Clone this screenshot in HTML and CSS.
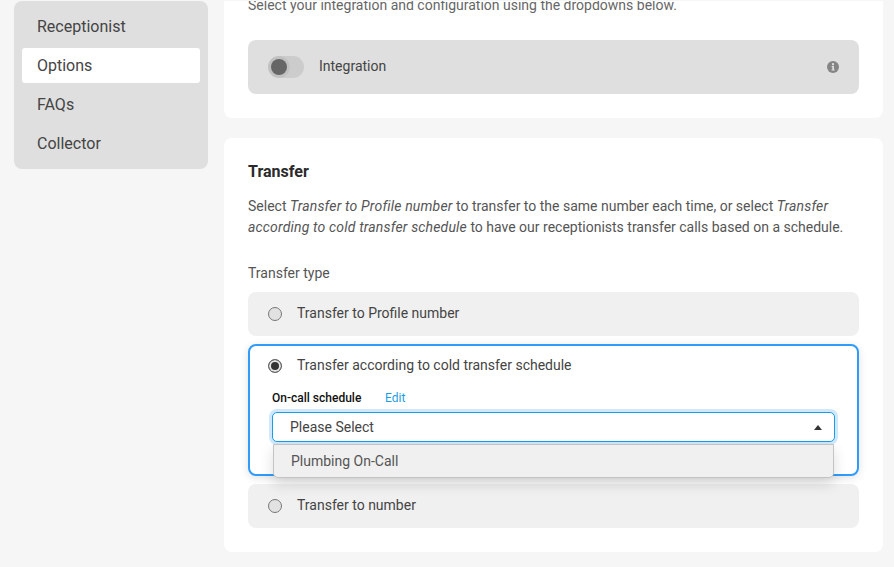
FILE: index.html
```html
<!DOCTYPE html>
<html lang="en">
<head>
    <meta charset="UTF-8">
    <meta name="viewport" content="width=device-width, initial-scale=1.0">
    <title>Options</title>
    <link rel="stylesheet" href="styles.css">
</head>
<body>
    <div class="layout">
        <nav class="sidebar">
            <a class="nav-item">Receptionist</a>
            <a class="nav-item active">Options</a>
            <a class="nav-item">FAQs</a>
            <a class="nav-item">Collector</a>
        </nav>

        <main class="content">
            <section class="card card-integration">
                <p class="card-intro">Select your integration and configuration using the dropdowns below.</p>
                <div class="integration-row">
                    <span class="toggle"><span class="toggle-knob"></span></span>
                    <span class="integration-label">Integration</span>
                    <svg class="info-icon" width="12" height="12" viewBox="0 0 12 12">
                        <circle cx="6" cy="6" r="6" fill="#858585"/>
                        <rect x="5" y="2.2" width="2" height="2" fill="#dfdfdf"/>
                        <path d="M4.6 5h2.4v3.6h.7v1H4.5v-1h.8V6h-.7z" fill="#dfdfdf"/>
                    </svg>
                </div>
            </section>

            <section class="card card-transfer">
                <h2 class="card-title">Transfer</h2>
                <p class="card-text">Select <em>Transfer to Profile number</em> to transfer to the same number each time, or select <em>Transfer according to cold transfer schedule</em> to have our receptionists transfer calls based on a schedule.</p>
                <div class="field-label">Transfer type</div>

                <div class="options">
                    <div class="option">
                        <div class="option-head">
                            <span class="radio"></span>
                            <span class="option-text">Transfer to Profile number</span>
                        </div>
                    </div>

                    <div class="option selected">
                        <div class="option-head">
                            <span class="radio checked"></span>
                            <span class="option-text">Transfer according to cold transfer schedule</span>
                        </div>
                        <div class="schedule-label">
                            <span class="schedule-name">On-call schedule</span>
                            <a class="schedule-edit">Edit</a>
                        </div>
                        <div class="select-wrap">
                            <div class="select">
                                <span>Please Select</span>
                                <span class="caret"></span>
                            </div>
                            <div class="select-menu">Plumbing On-Call</div>
                        </div>
                    </div>

                    <div class="option">
                        <div class="option-head">
                            <span class="radio"></span>
                            <span class="option-text">Transfer to number</span>
                        </div>
                    </div>
                </div>
            </section>
        </main>
    </div>
</body>
</html>
```

FILE: styles.css
```css
* {
    box-sizing: border-box;
}
html, body {
    height: 100%;
}
body {
    margin: 0;
    padding-top: 1px;
    overflow: hidden;
    background-color: #f6f6f6;
    color: #444;
    font-family: Roboto, "Liberation Sans", sans-serif;
}
.layout {
    display: flex;
    align-items: flex-start;
    gap: 16px;
    padding: 0 11px 0 14px;
}

/* sidebar */
.sidebar {
    width: 194px;
    flex-shrink: 0;
    display: flex;
    flex-direction: column;
    gap: 4px;
    padding: 8px;
    background-color: #dfdfdf;
    border-radius: 8px;
}
.nav-item {
    height: 35px;
    line-height: 35px;
    padding-left: 15px;
    font-size: 16px;
    color: #444;
    border-radius: 3px;
}
.nav-item.active {
    background-color: #fff;
}

/* cards */
.content {
    flex: 1;
    display: flex;
    flex-direction: column;
    gap: 20px;
}
.card {
    background-color: #fff;
    border-radius: 0 0 8px 8px;
    padding: 0 24px;
}
.card-integration {
    height: 117px;
    overflow: hidden;
}
.card-intro {
    margin: -6px 0 0;
    height: 45px;
    font-size: 14px;
    line-height: 21px;
    color: #666;
}
.integration-row {
    height: 54px;
    display: flex;
    align-items: center;
    padding: 0 20px;
    background-color: #dfdfdf;
    border-radius: 8px;
}
.toggle {
    width: 36px;
    height: 22px;
    display: flex;
    align-items: center;
    padding-left: 3px;
    background-color: #ccc;
    border-radius: 11px;
}
.toggle-knob {
    width: 16px;
    height: 16px;
    background-color: #666;
    border-radius: 50%;
    box-shadow: 0 0 0 3px rgba(0, 0, 0, 0.05);
}
.integration-label {
    margin-left: 15px;
    padding-bottom: 2px;
    font-size: 14px;
    flex: 1;
}
.info-icon {
    margin-bottom: 1px;
}
.card-transfer {
    height: 414px;
    border-radius: 8px;
    padding-top: 24px;
}
.card-title {
    margin: 0;
    font-size: 16px;
    line-height: 19px;
    font-weight: 700;
    color: #2b2b2b;
}
.card-text {
    margin: 15px 0 0;
    font-size: 14px;
    line-height: 21px;
    color: #555;
}
.card-text em {
    letter-spacing: 0.17px;
}
.field-label {
    margin-top: 25px;
    font-size: 14px;
    line-height: 21px;
    color: #555;
}

/* transfer options */
.options {
    display: flex;
    flex-direction: column;
    gap: 8px;
    margin-top: 8px;
}
.option {
    min-height: 44px;
    padding: 0 20px;
    background-color: #f0f0f0;
    border-radius: 8px;
    font-size: 14px;
}
.option-head {
    height: 44px;
    display: flex;
    align-items: center;
    gap: 15px;
}
.option-text {
    padding-bottom: 2px;
}
.radio {
    width: 14px;
    height: 14px;
    flex-shrink: 0;
    background-color: #e2e2e2;
    border: 1px solid #777;
    border-radius: 50%;
}
.radio.checked {
    background-color: #333;
    border: 1px solid #666;
    box-shadow: inset 0 0 0 2px #e6e6e6;
}
.option.selected {
    height: 132px;
    padding: 0 22px 0 18px;
    background-color: #fff;
    border: 2px solid #2f9bfb;
    box-shadow: 0 2px 8px rgba(0, 0, 0, 0.12);
}
.option.selected .option-head {
    height: 40px;
    margin-bottom: 4px;
}
.schedule-label {
    display: flex;
    margin-left: 4px;
    margin-top: 5px;
    font-size: 12px;
    line-height: 14px;
}
.schedule-name {
    width: 113px;
    font-weight: 500;
    color: #111;
}
.schedule-edit {
    color: #1a9de6;
}

/* select, menu lies over the next option */
.select-wrap {
    position: relative;
    margin: 7px 0 0 4px;
}
.select {
    height: 30px;
    display: flex;
    align-items: center;
    justify-content: space-between;
    padding: 0 12px 0 17px;
    background-color: #fff;
    border: 1px solid #1a9de6;
    border-radius: 5px;
    box-shadow: 0 0 0 3px #cfe8fc;
    color: #444;
}
.caret {
    width: 0;
    height: 0;
    border-left: 4.5px solid transparent;
    border-right: 4.5px solid transparent;
    border-bottom: 5px solid #333;
}
.select-menu {
    position: absolute;
    top: 32px;
    left: 1px;
    right: 1px;
    height: 34px;
    line-height: 32px;
    padding-left: 17px;
    background-color: #f0f0f0;
    border: 1px solid #c4c4c4;
    border-radius: 0 0 5px 5px;
    box-shadow: 0 6px 14px rgba(0, 0, 0, 0.14);
    color: #555;
    z-index: 2;
}
```
